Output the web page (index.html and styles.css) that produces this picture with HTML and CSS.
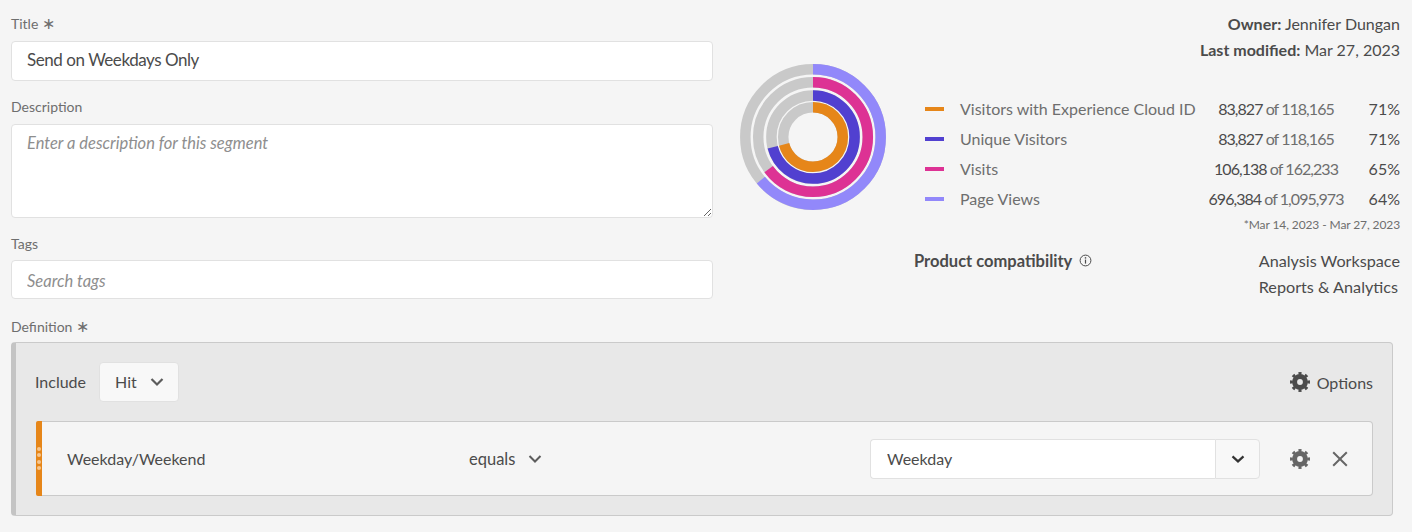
FILE: index.html
```html
<!DOCTYPE html>
<html lang="en">
<head>
    <meta charset="UTF-8">
    <meta name="viewport" content="width=device-width, initial-scale=1.0">
    <title>Segment - Send on Weekdays Only</title>
    <link rel="stylesheet" href="styles.css">
</head>
<body>

    <div class="top">
        <form class="details">
            <div class="form-group">
                <label for="title">Title <span class="req">∗</span></label>
                <input class="title-input" type="text" id="title" value="Send on Weekdays Only">
            </div>
            <div class="form-group">
                <label for="description">Description</label>
                <textarea id="description" placeholder="Enter a description for this segment"></textarea>
            </div>
            <div class="form-group tags-group">
                <label for="tags">Tags</label>
                <input class="tags-input" type="text" id="tags" placeholder="Search tags">
            </div>
        </form>

        <div class="summary">
            <div class="meta">
                <p><b>Owner:</b> Jennifer Dungan</p>
                <p><b>Last modified:</b> Mar 27, 2023</p>
            </div>
            <div class="stats">
                <svg class="donut" width="146" height="146" viewBox="0 0 146 146">
                    <g fill="none" stroke-width="10.5" transform="rotate(-90 73 73)">
                        <circle cx="73" cy="73" r="67.7" stroke="#c9c9c9"/>
                        <circle cx="73" cy="73" r="54.8" stroke="#c9c9c9"/>
                        <circle cx="73" cy="73" r="41.6" stroke="#c9c9c9"/>
                        <circle cx="73" cy="73" r="29.8" stroke="#c9c9c9"/>
                        <circle cx="73" cy="73" r="67.7" stroke="#9288fa" pathLength="100" stroke-dasharray="64 100"/>
                        <circle cx="73" cy="73" r="54.8" stroke="#dd3294" pathLength="100" stroke-dasharray="65 100"/>
                        <circle cx="73" cy="73" r="41.6" stroke="#5140d0" pathLength="100" stroke-dasharray="71 100"/>
                        <circle cx="73" cy="73" r="29.8" stroke="#e68619" pathLength="100" stroke-dasharray="71 100"/>
                    </g>
                </svg>
                <div class="legend-wrap">
                    <div class="legend">
                        <span class="swatch orange"></span>
                        <span class="name">Visitors with Experience Cloud ID</span>
                        <span class="count"><em>83,827</em> of 118,165</span>
                        <span class="pct">71%</span>

                        <span class="swatch indigo"></span>
                        <span class="name">Unique Visitors</span>
                        <span class="count"><em>83,827</em> of 118,165</span>
                        <span class="pct">71%</span>

                        <span class="swatch pink"></span>
                        <span class="name">Visits</span>
                        <span class="count"><em>106,138</em> of 162,233</span>
                        <span class="pct">65%</span>

                        <span class="swatch lilac"></span>
                        <span class="name">Page Views</span>
                        <span class="count"><em>696,384</em> of 1,095,973</span>
                        <span class="pct">64%</span>
                    </div>
                    <p class="range">*Mar 14, 2023 - Mar 27, 2023</p>
                </div>
            </div>
            <div class="compat">
                <div class="compat-label">
                    <b>Product compatibility</b>
                    <svg width="13" height="13" viewBox="0 0 13 13">
                        <circle cx="6.5" cy="6.5" r="5.4" fill="none" stroke="#4b4b4b" stroke-width="1"/>
                        <rect x="5.9" y="5.6" width="1.2" height="4" fill="#4b4b4b"/>
                        <rect x="5.8" y="3.2" width="1.4" height="1.4" fill="#4b4b4b"/>
                    </svg>
                </div>
                <div class="compat-list">
                    <p>Analysis Workspace</p>
                    <p>Reports &amp; Analytics</p>
                </div>
            </div>
        </div>
    </div>

    <div class="definition">
        <label>Definition <span class="req">∗</span></label>
        <div class="panel">
            <div class="panel-head">
                <span class="include">Include</span>
                <div class="scope-btn">
                    <span>Hit</span>
                    <svg width="14" height="10" viewBox="0 0 14 10"><path d="M1.5 2 7 7.5 12.5 2" fill="none" stroke="#5c5c5c" stroke-width="2.2"/></svg>
                </div>
                <div class="options">
                    <svg class="gear dark" width="20" height="20" viewBox="0 0 20 20">
                        <circle cx="10" cy="10" r="5.4" fill="none" stroke-width="5"/>
                        <circle cx="10" cy="10" r="8.6" fill="none" stroke-width="2.8" pathLength="80" stroke-dasharray="4.6 5.4" stroke-dashoffset="2.3"/>
                    </svg>
                    Options
                </div>
            </div>
            <div class="rule">
                <div class="grip"><i></i><i></i><i></i><i></i></div>
                <span class="rule-name">Weekday/Weekend</span>
                <div class="rule-op">
                    equals
                    <svg width="14" height="10" viewBox="0 0 14 10"><path d="M1.5 2 7 7.5 12.5 2" fill="none" stroke="#5c5c5c" stroke-width="2"/></svg>
                </div>
                <div class="combo">
                    <input type="text" value="Weekday">
                    <div class="combo-btn">
                        <svg width="14" height="10" viewBox="0 0 14 10"><path d="M1.5 2.4 7 7.4 12.5 2.4" fill="none" stroke="#333" stroke-width="2.2"/></svg>
                    </div>
                </div>
                <svg class="gear" width="20" height="20" viewBox="0 0 20 20">
                    <circle cx="10" cy="10" r="5.4" fill="none" stroke-width="5"/>
                    <circle cx="10" cy="10" r="8.6" fill="none" stroke-width="2.8" pathLength="80" stroke-dasharray="4.6 5.4" stroke-dashoffset="2.3"/>
                </svg>
                <svg class="close" width="16" height="16" viewBox="0 0 16 16"><path d="M1.2 1.2 14.8 14.8M14.8 1.2 1.2 14.8" fill="none" stroke="#666" stroke-width="2"/></svg>
            </div>
        </div>
    </div>

</body>
</html>
```

FILE: styles.css
```css
* {
    box-sizing: border-box;
}
body {
    font-family: Lato, "Open Sans", Arial, sans-serif;
    font-size: 16px;
    background-color: #f5f5f5;
    color: #4b4b4b;
    margin: 0;
    padding: 15px 12px 0 11px;
}
p {
    margin: 0;
}
label {
    display: block;
    font-size: 14px;
    line-height: 18px;
    color: #6e6e6e;
}
.req {
    font-family: "DejaVu Sans", sans-serif;
    font-size: 16px;
    line-height: 14px;
}

.top {
    display: flex;
}
.details {
    flex: none;
    width: 702px;
}
.form-group {
    margin-bottom: 17px;
}
.form-group label {
    margin-bottom: 8px;
}
.tags-group label {
    margin-bottom: 7px;
}
input,
textarea {
    display: block;
    width: 100%;
    font-family: inherit;
    color: #4b4b4b;
    background-color: #fff;
    border: 1px solid #e1e1e1;
    border-radius: 4px;
    padding: 0 15px;
    outline: none;
}
input::placeholder,
textarea::placeholder {
    font-style: italic;
    color: #8e8e8e;
    opacity: 1;
}
.title-input {
    height: 40px;
    font-size: 17px;
    letter-spacing: -0.45px;
    padding-bottom: 4px;
}
.tags-input {
    height: 39px;
    font-size: 16.5px;
    padding-top: 2px;
}
textarea {
    height: 94px;
    font-size: 16.5px;
    line-height: 20px;
    padding-top: 8px;
    resize: both;
}

.summary {
    flex: 1;
}
.meta {
    text-align: right;
    font-size: 16px;
    line-height: 26px;
    height: 47px;
    margin-top: -4px;
    margin-bottom: 2px;
}
.stats {
    display: flex;
    margin-left: 27px;
    margin-top: 6px;
}
.donut {
    flex: none;
}
.legend-wrap {
    flex: 1;
    margin-left: 39px;
    padding-top: 30px;
}
.legend {
    display: grid;
    grid-template-columns: 35px 1fr 150px 49px;
    grid-auto-rows: 30px;
    align-items: center;
}
.swatch {
    width: 19px;
    height: 4px;
}
.swatch.orange { background-color: #e68619; }
.swatch.indigo { background-color: #5140d0; }
.swatch.pink { background-color: #dd3294; }
.swatch.lilac { background-color: #9288fa; }
.name {
    color: #6e6e6e;
    white-space: nowrap;
    padding-bottom: 2px;
}
.count {
    text-align: center;
    font-size: 16px;
    letter-spacing: -0.95px;
    color: #6e6e6e;
    white-space: nowrap;
    padding-bottom: 2px;
}
.count em {
    font-style: normal;
    color: #4b4b4b;
}
.pct {
    text-align: right;
    padding-bottom: 2px;
}
.range {
    text-align: right;
    font-size: 12px;
    letter-spacing: -0.1px;
    color: #6e6e6e;
    line-height: 20px;
    margin-top: 1px;
}
.compat {
    display: flex;
    justify-content: space-between;
    margin-left: 201px;
    margin-top: 13px;
    font-size: 16.2px;
    line-height: 26px;
}
.compat-label b {
    font-size: 16.5px;
}
.compat-label svg {
    margin-left: 3px;
}

.definition {
    margin-right: 7px;
    margin-top: 2px;
}
.definition label {
    margin-bottom: 6px;
}
.panel {
    height: 174px;
    background-color: #e8e8e8;
    border: 1px solid #cacaca;
    border-left: 5px solid #c4c4c4;
    border-radius: 4px;
    padding: 19px 19px 0 20px;
}
.panel-head {
    display: flex;
    align-items: center;
    height: 40px;
    margin-bottom: 19px;
}
.include {
    margin-left: -1px;
    margin-right: 13px;
    padding-bottom: 2px;
}
.scope-btn {
    display: flex;
    align-items: center;
    justify-content: space-between;
    width: 80px;
    height: 40px;
    padding: 0 14px 0 15px;
    background-color: #f8f8f8;
    border: 1px solid #e1e1e1;
    border-radius: 4px;
}
.scope-btn span {
    padding-bottom: 2px;
}
.options {
    display: flex;
    align-items: center;
    gap: 7px;
    margin-left: auto;
}
.gear circle {
    stroke: #666;
}
.gear.dark circle {
    stroke: #4b4b4b;
}
.rule {
    display: flex;
    align-items: center;
    height: 75px;
    background-color: #f5f5f5;
    border: 1px solid #cacaca;
    border-left: 0;
    border-radius: 4px;
}
.grip {
    flex: none;
    align-self: stretch;
    width: 6px;
    margin: -1px 0;
    background-color: #e68619;
    border-radius: 2px 0 0 2px;
    display: flex;
    flex-direction: column;
    justify-content: center;
    align-items: center;
    gap: 2.5px;
}
.grip i {
    width: 4px;
    height: 4px;
    border-radius: 50%;
    background-color: #f6c68e;
}
.rule-name {
    flex: none;
    width: 402px;
    margin-left: 25px;
}
.rule-op {
    flex: none;
    width: 401px;
    display: flex;
    align-items: center;
    gap: 13px;
    font-size: 16.5px;
}
.combo {
    flex: none;
    display: flex;
    width: 390px;
    height: 40px;
}
.combo input {
    flex: 1;
    min-width: 0;
    height: 40px;
    font-size: 16px;
    padding-left: 16px;
    border-right: 0;
    border-radius: 4px 0 0 4px;
}
.combo-btn {
    flex: none;
    width: 45px;
    display: flex;
    align-items: center;
    justify-content: center;
    background-color: #f8f8f8;
    border: 1px solid #e1e1e1;
    border-radius: 0 4px 4px 0;
}
.rule .gear {
    margin-left: 30px;
}
.close {
    margin-left: 22px;
}
```
